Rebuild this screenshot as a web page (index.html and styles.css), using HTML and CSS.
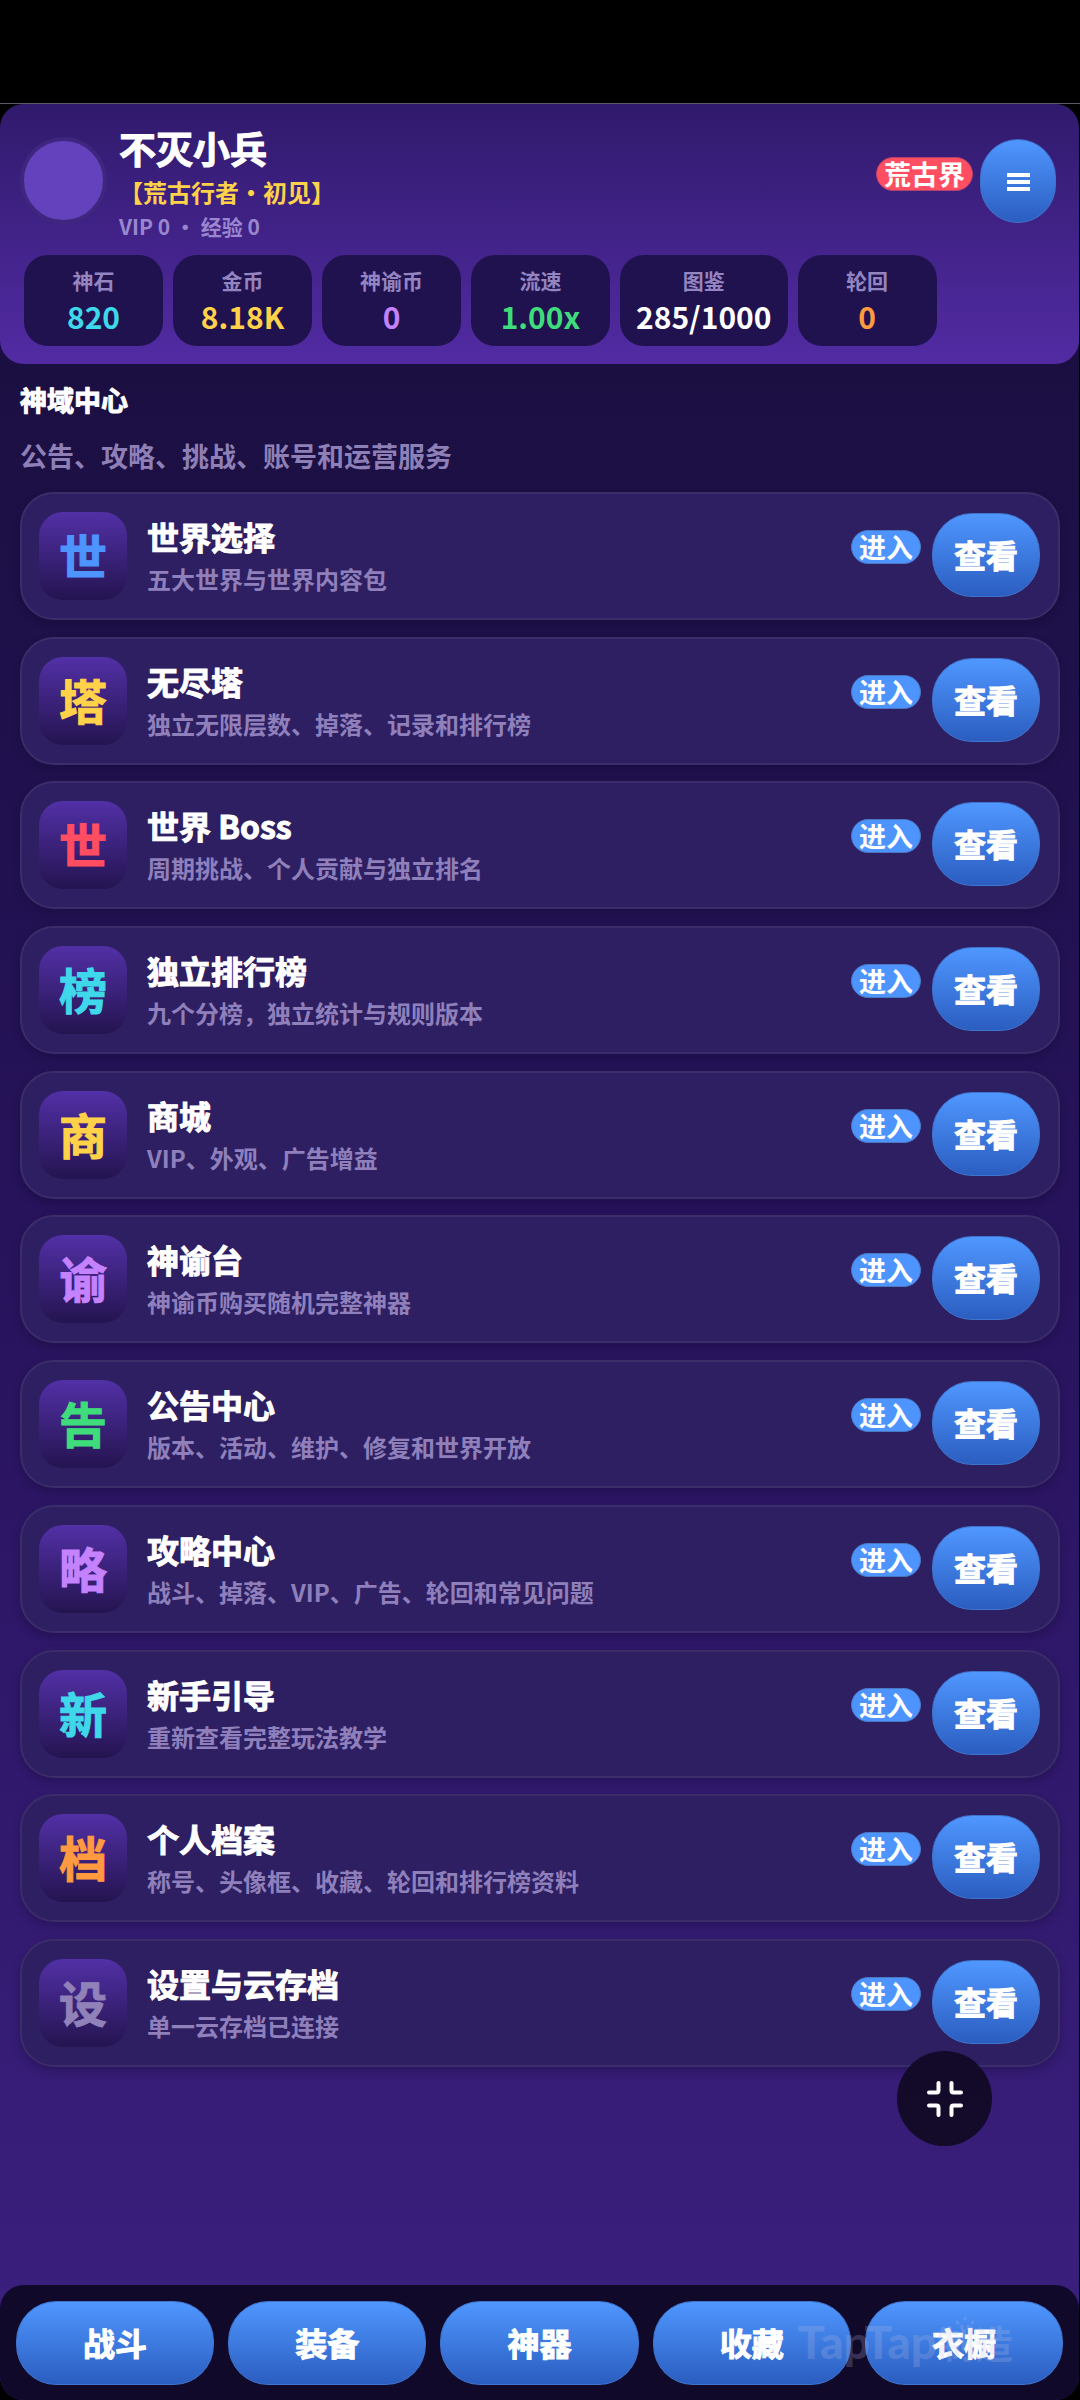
FILE: index.html
```html
<!DOCTYPE html>
<html lang="zh-CN">
<head>
<meta charset="utf-8">
<meta name="viewport" content="width=device-width, initial-scale=1">
<title>神域中心</title>
<link rel="stylesheet" href="styles.css">
</head>
<body>
<div class="statusbar"></div>
<div class="app">
  <header class="profile">
    <div class="profile-top">
      <div class="avatar"></div>
      <div class="identity">
        <p class="player">不灭小兵</p>
        <p class="rank">【荒古行者・初见】</p>
        <p class="level">VIP 0 · 经验 0</p>
      </div>
      <span class="badge badge-red">荒古界</span>
      <button class="btn btn-menu" type="button" aria-label="菜单">
        <svg viewBox="0 0 24 20" width="24" height="20"><path d="M1 3h23M1 10h23M1 17h23" stroke="#fff" stroke-width="4"/></svg>
      </button>
    </div>
    <div class="stats">
      <div class="stat"><span class="stat-label">神石</span><span class="stat-value cyan">820</span></div>
      <div class="stat"><span class="stat-label">金币</span><span class="stat-value gold">8.18K</span></div>
      <div class="stat"><span class="stat-label">神谕币</span><span class="stat-value violet">0</span></div>
      <div class="stat"><span class="stat-label">流速</span><span class="stat-value green">1.00x</span></div>
      <div class="stat"><span class="stat-label">图鉴</span><span class="stat-value">285/1000</span></div>
      <div class="stat"><span class="stat-label">轮回</span><span class="stat-value orange">0</span></div>
    </div>
  </header>
  <main class="center">
    <h1 class="heading">神域中心</h1>
    <p class="subheading">公告、攻略、挑战、账号和运营服务</p>
    <ul class="list">
      <li class="card"><span class="tile blue">世</span><div class="info"><h2 class="title">世界选择</h2><p class="desc">五大世界与世界内容包</p></div><span class="badge">进入</span><button class="btn btn-view" type="button">查看</button></li>
      <li class="card"><span class="tile gold">塔</span><div class="info"><h2 class="title">无尽塔</h2><p class="desc">独立无限层数、掉落、记录和排行榜</p></div><span class="badge">进入</span><button class="btn btn-view" type="button">查看</button></li>
      <li class="card"><span class="tile red">世</span><div class="info"><h2 class="title">世界 Boss</h2><p class="desc">周期挑战、个人贡献与独立排名</p></div><span class="badge">进入</span><button class="btn btn-view" type="button">查看</button></li>
      <li class="card"><span class="tile cyan">榜</span><div class="info"><h2 class="title">独立排行榜</h2><p class="desc">九个分榜，独立统计与规则版本</p></div><span class="badge">进入</span><button class="btn btn-view" type="button">查看</button></li>
      <li class="card"><span class="tile gold">商</span><div class="info"><h2 class="title">商城</h2><p class="desc">VIP、外观、广告增益</p></div><span class="badge">进入</span><button class="btn btn-view" type="button">查看</button></li>
      <li class="card"><span class="tile violet">谕</span><div class="info"><h2 class="title">神谕台</h2><p class="desc">神谕币购买随机完整神器</p></div><span class="badge">进入</span><button class="btn btn-view" type="button">查看</button></li>
      <li class="card"><span class="tile green">告</span><div class="info"><h2 class="title">公告中心</h2><p class="desc">版本、活动、维护、修复和世界开放</p></div><span class="badge">进入</span><button class="btn btn-view" type="button">查看</button></li>
      <li class="card"><span class="tile violet">略</span><div class="info"><h2 class="title">攻略中心</h2><p class="desc">战斗、掉落、VIP、广告、轮回和常见问题</p></div><span class="badge">进入</span><button class="btn btn-view" type="button">查看</button></li>
      <li class="card"><span class="tile cyan">新</span><div class="info"><h2 class="title">新手引导</h2><p class="desc">重新查看完整玩法教学</p></div><span class="badge">进入</span><button class="btn btn-view" type="button">查看</button></li>
      <li class="card"><span class="tile orange">档</span><div class="info"><h2 class="title">个人档案</h2><p class="desc">称号、头像框、收藏、轮回和排行榜资料</p></div><span class="badge">进入</span><button class="btn btn-view" type="button">查看</button></li>
      <li class="card"><span class="tile muted">设</span><div class="info"><h2 class="title">设置与云存档</h2><p class="desc">单一云存档已连接</p></div><span class="badge">进入</span><button class="btn btn-view" type="button">查看</button></li>
    </ul>
  </main>
  <nav class="tabs">
    <button class="btn" type="button">战斗</button>
    <button class="btn" type="button">装备</button>
    <button class="btn" type="button">神器</button>
    <button class="btn" type="button">收藏</button>
    <button class="btn" type="button">衣橱</button>
    <div class="watermark"><span class="watermark-brand">TapTap</span><span>制造</span>
      <svg class="watermark-spark" viewBox="0 0 24 14" width="24" height="14" fill="none" stroke="currentColor" stroke-width="3" stroke-linecap="round"><path d="M12 2v1M4 6l1 1M20 6l-1 1M9 10v2M15 10v2"/></svg>
    </div>
  </nav>
  <button class="fab" type="button" aria-label="退出全屏">
    <svg viewBox="0 0 36 36" width="36" height="36" fill="none" stroke="#fff" stroke-width="4" stroke-linecap="round" stroke-linejoin="round"><path d="M11.500 2v7.500q0 2-2 2H2M24.500 2v7.500q0 2 2 2H34M11.500 34v-7.500q0-2-2-2H2M24.500 34v-7.500q0-2 2-2H34"/></svg>
  </button>
</div>
</body>
</html>
```
FILE: styles.css
```css
* { box-sizing: border-box; }

body {
  margin: 0;
  min-height: 100vh;
  display: flex;
  flex-direction: column;
  background: #000;
  color: #fff;
  font-family: "Noto Sans CJK SC", sans-serif;
  font-weight: 700;
}

p, h1, h2, ul { margin: 0; padding: 0; font-weight: 700; }

.statusbar { height: 104px; border-bottom: 1px solid #5c5768; }

.app {
  position: relative;
  flex: 1;
  display: flex;
  flex-direction: column;
  margin-right: 1px;
  border-radius: 24px;
  background: linear-gradient(#170e3a, #27135c 50%, #3c2080);
}

.profile {
  display: flex;
  flex-direction: column;
  gap: 10px;
  padding: 20px 23px 18px 20px;
  border-radius: 24px;
  background: linear-gradient(#301a6c, #522ba3);
}

.profile-top { display: flex; align-items: center; height: 121px; }

.avatar {
  width: 87px;
  height: 87px;
  margin-top: -8px;
  border: 4px solid #3f2780;
  border-radius: 50%;
  background: #6442be;
}

.identity { flex: 1; padding: 0 0 6px 12px; }
.player { font-size: 37px; line-height: 52px; -webkit-text-stroke: 1px; }
.rank { font-size: 24px; line-height: 36px; color: #ffd24a; }
.level { font-size: 21px; line-height: 32px; color: #9a86cf; }

.badge {
  height: 34px;
  padding: 0 7px;
  border: 1px solid #4a78c0;
  border-radius: 17px;
  background: #4d94ff;
  font-size: 27px;
  line-height: 32px;
  margin-bottom: 18px;
}
.badge-red { margin-bottom: 22px; border-color: #b0446e; background: #ff4d62; }

.btn {
  height: 84px;
  padding: 0 0 2px;
  border: 1px solid #3f74cc;
  border-radius: 40px;
  background: linear-gradient(#4f97ff, #2b5dc0);
  color: #fff;
  font: inherit;
  font-size: 32px;
  -webkit-text-stroke: 1px;
}
.btn-menu { width: 76px; margin: 0 0 8px 7px; border-radius: 38px; }
.btn-menu svg { display: block; margin: 4px auto 0; }

.stats { display: flex; gap: 10px; padding-left: 4px; }

.stat {
  min-width: 139px;
  height: 91px;
  padding: 9px 16px;
  display: flex;
  flex-direction: column;
  align-items: center;
  border-radius: 24px;
  background: #20124e;
}
.stat-label { font-size: 21px; line-height: 32px; color: #9484c0; }
.stat-value { font-size: 30px; line-height: 40px; }

.blue { color: #4d94ff; }
.gold { color: #ffd24a; }
.red { color: #ff4d62; }
.cyan { color: #3fd8ea; }
.violet { color: #c582ff; }
.green { color: #3fdc7c; }
.orange { color: #ff9a40; }
.muted { color: #9082b8; }

.center { flex: 1; display: flex; flex-direction: column; padding: 16px 19px 218px 20px; }
.heading { font-size: 27px; line-height: 40px; -webkit-text-stroke: 1px; }
.subheading { margin: 16px 0; font-size: 27px; line-height: 40px; color: #8e80b6; }

.list {
  flex: 1;
  display: flex;
  flex-direction: column;
  justify-content: space-between;
  gap: 16px;
  list-style: none;
}

.card {
  display: flex;
  align-items: center;
  height: 128px;
  padding: 0 18px 0 17px;
  border: 2px solid #3b2d69;
  border-radius: 34px;
  background: #2d1f62;
  box-shadow: 0 4px 8px rgba(10, 4, 34, 0.25);
}

.tile {
  width: 88px;
  height: 88px;
  border-radius: 24px;
  background: linear-gradient(#5230a6, #241450);
  font-size: 48px;
  line-height: 84px;
  text-align: center;
  -webkit-text-stroke: 1px;
}
.info { flex: 1; padding: 4px 0 0 20px; }
.title { font-size: 32px; line-height: 42px; -webkit-text-stroke: 1px; }
.desc { font-size: 24px; line-height: 44px; color: #8f80bc; }
.btn-view { width: 108px; margin: 0 0 2px 11px; }

.tabs {
  position: relative;
  display: flex;
  gap: 14px;
  height: 115px;
  padding: 16px;
  border-radius: 24px;
  background: #10092a;
}
.tabs .btn { flex: 1; }

.watermark {
  position: absolute;
  right: 66px;
  bottom: 36px;
  display: flex;
  align-items: center;
  font-size: 38px;
  line-height: 44px;
  color: rgba(190, 190, 225, 0.22);
  pointer-events: none;
}
.watermark-brand { font-family: Lato, sans-serif; font-weight: 900; font-size: 46px; }
.watermark-spark { position: absolute; right: 36px; top: -4px; }

.fab {
  position: absolute;
  right: 87px;
  bottom: 254px;
  display: grid;
  place-items: center;
  width: 95px;
  height: 95px;
  padding: 0;
  border: 0;
  border-radius: 50%;
  background: rgba(18, 9, 38, 0.95);
}
```
